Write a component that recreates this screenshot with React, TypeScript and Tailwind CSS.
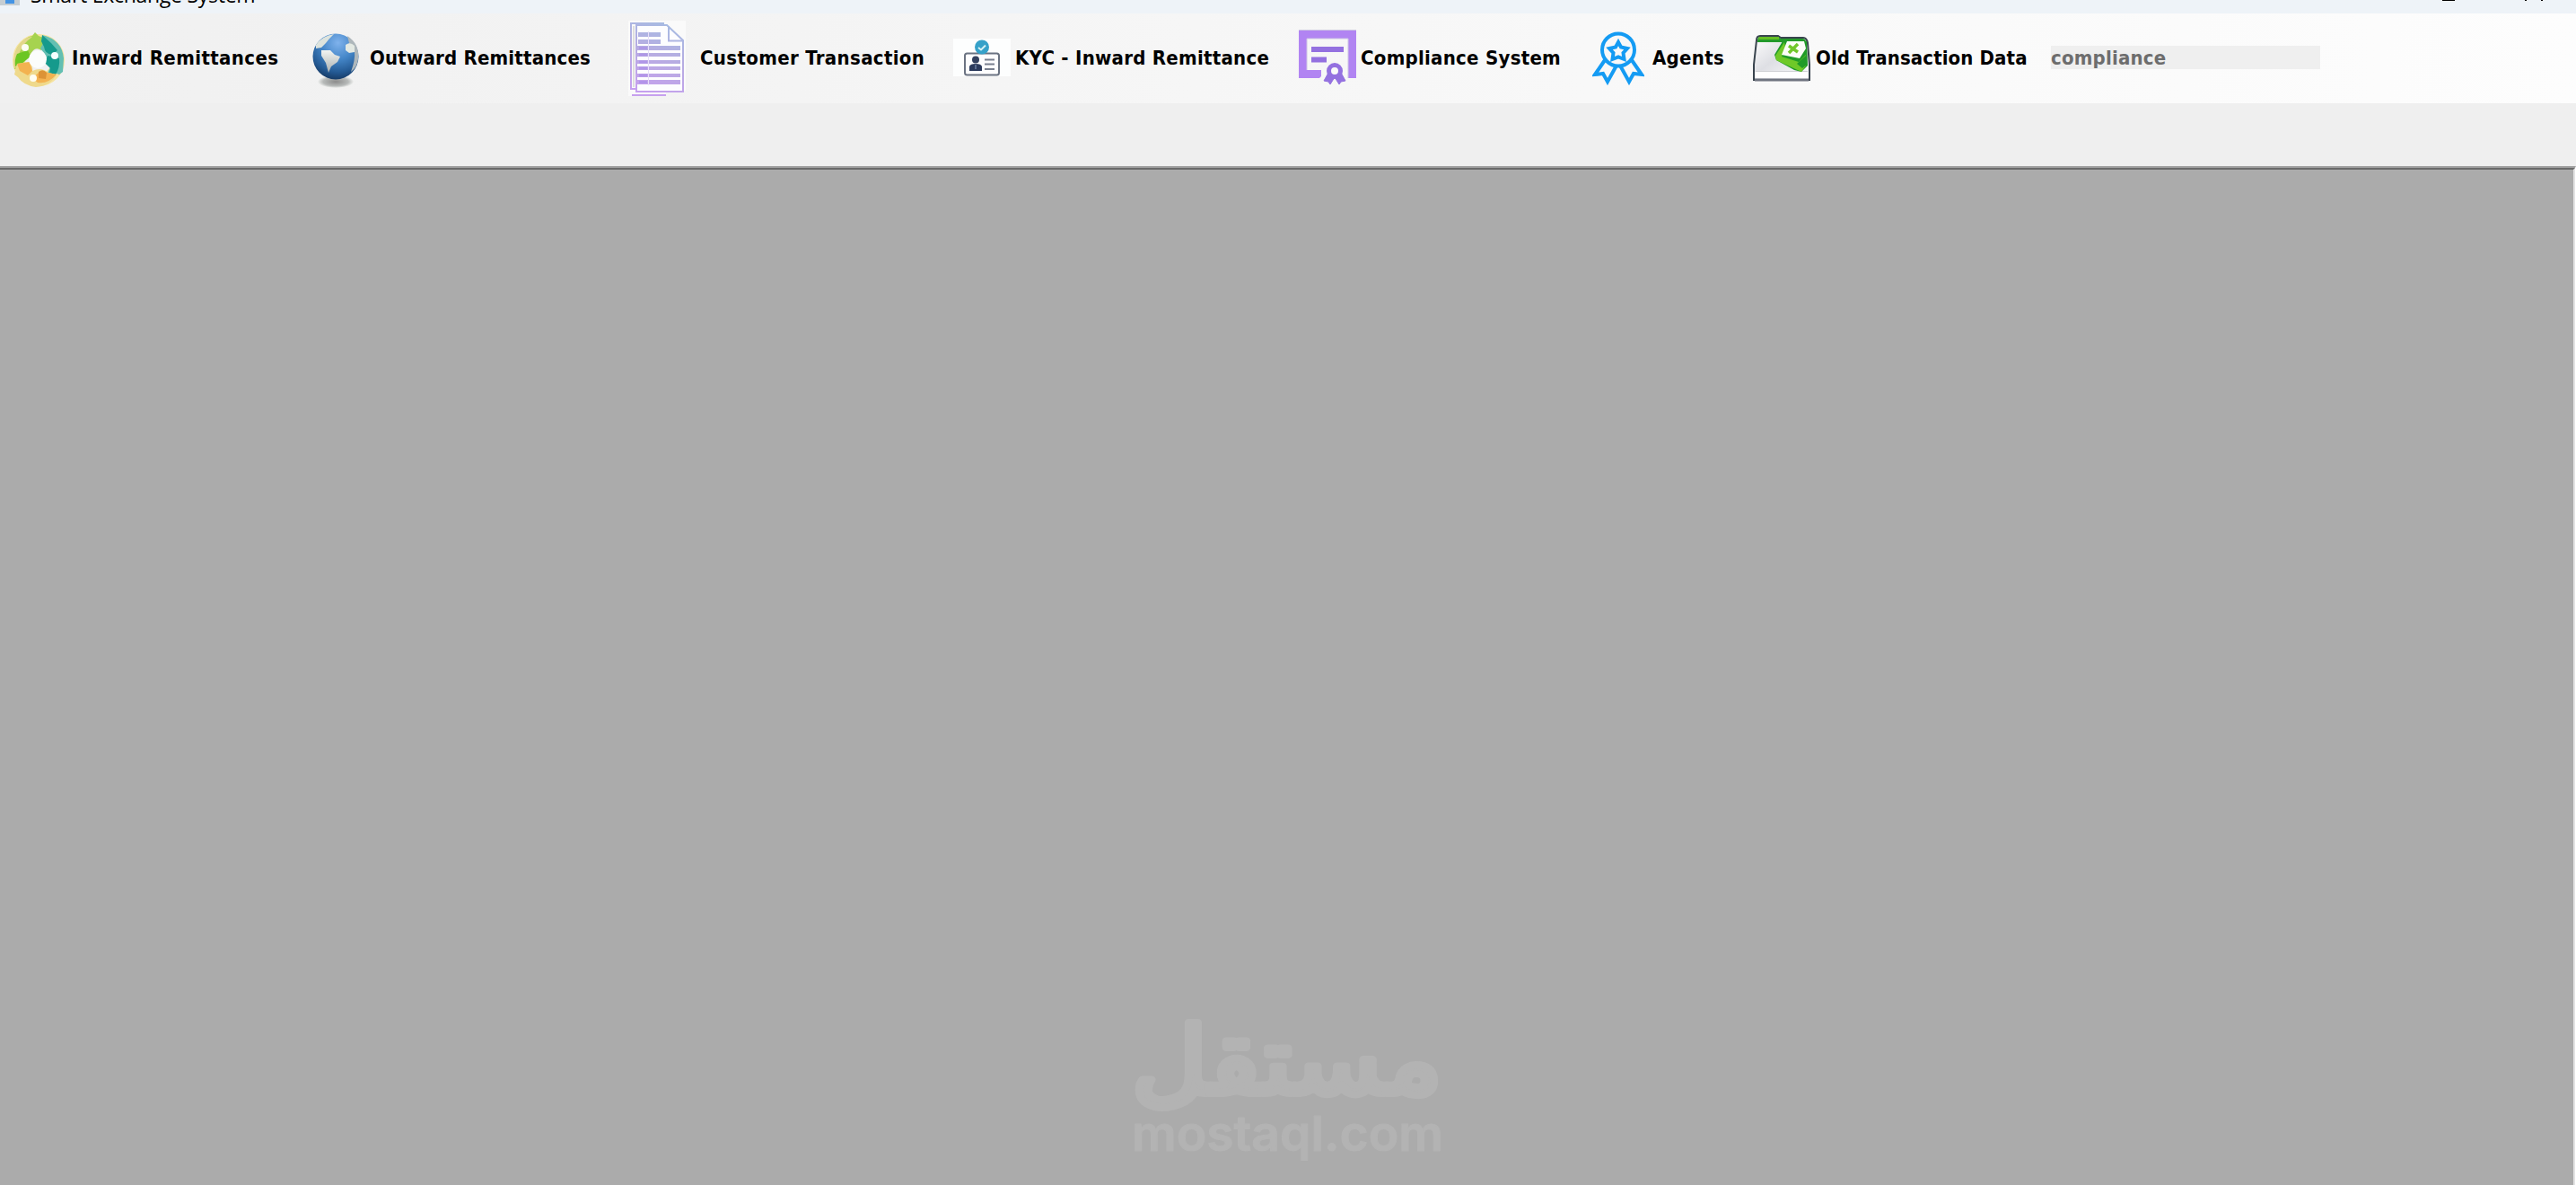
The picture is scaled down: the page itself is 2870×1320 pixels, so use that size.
import type { ReactNode } from 'react';

const InwardIcon = () => (
  <svg width="60" height="64" viewBox="1 0 60 64">
    <circle cx="31" cy="33" r="22" fill="none" stroke="#f6e3a0" strokeWidth="14" />
    <path d="M4 43 Q2 22 12 13 Q18 7 24 6 L27 2 L31 6 Q40 8 39 17 L34 22 Q26 17 22 27 L14 36 L7 42Z" fill="#a6d34f" />
    <path d="M4 42 Q1 21 14 11 Q19 7 24 7 Q14 14 10 24 Q6 32 7 41Z" fill="#e3d68c" />
    <path d="M7 26 L19 22 L22 29 L13 36 L5 40 Q4 32 7 26Z" fill="#6cc623" />
    <path d="M35 5 Q57 10 59 31 L58 46 L54 49 Q47 45 39 51 L44 41 Q41 39 38 36 L40 30 Q37 24 33 20 L37 12Z" fill="#63bfb2" />
    <path d="M35 5 L45 14 L52 22 L46 27 Q38 26 37 18 L34 12Z M41 28 L54 31 Q55 41 50 49 L43 48 L44 42 L38 36Z" fill="#159a8c" />
    <path d="M4 49 L7 37 L21 35 Q25 40 24 45 Q34 40 42 47 L51 49 Q44 62 28 63 Q14 61 8 52Z" fill="#efd98b" />
    <path d="M7 37 L21 35 L24 45 L19 50 L10 45Z M25 54 Q30 43 42 47 L51 49 Q41 60 30 58Z" fill="#f3b250" />
    <path d="M31 46 Q36 42 40 47 L39 54 L31 53Z" fill="#dc9336" />
    <circle cx="30" cy="32" r="10" fill="#fbfdfb" />
    <circle cx="16" cy="19" r="4" fill="#fdfdf4" />
    <circle cx="49" cy="28" r="4" fill="#f5ffff" />
    <circle cx="25" cy="53" r="4" fill="#fffdf0" />
  </svg>
);

const GlobeIcon = () => (
  <svg width="54" height="62" viewBox="0 0 54 62">
    <defs>
      <radialGradient id="ocean" cx="0.55" cy="0.2" r="0.8">
        <stop offset="0" stopColor="#7fb2ec" />
        <stop offset="0.45" stopColor="#4486c8" />
        <stop offset="0.8" stopColor="#245a94" />
        <stop offset="1" stopColor="#173c68" />
      </radialGradient>
      <radialGradient id="shade">
        <stop offset="0" stopColor="#8b8b8b" />
        <stop offset="0.7" stopColor="#b7bab9" />
        <stop offset="1" stopColor="#f0f1f0" />
      </radialGradient>
      <linearGradient id="land" x2="0" y2="1">
        <stop offset="0" stopColor="#f2f4f1" />
        <stop offset="1" stopColor="#a7adaf" />
      </linearGradient>
    </defs>
    <ellipse cx="26" cy="54" rx="20" ry="7" fill="url(#shade)" />
    <circle cx="26" cy="26" r="25.5" fill="url(#ocean)" />
    <path d="M4 13 Q11 3 24 1 L19 6 L15 11 L10 16 L4 17Z" fill="#dde3dd" />
    <path d="M39 3 Q53 12 51 29 Q50 38 43 43 Q48 29 47 21 L40 21 L37 16 L41 11Z" fill="#aeb7bb" />
    <path d="M37 13 Q42 9 47 14 L47 21 L41 22 L37 19Z" fill="#e3e9e3" />
    <path d="M10 19 L20 19 L25 24 L31 26 L28 32 L21 37 L18 44 L15 33 L10 25Z" fill="url(#land)" />
  </svg>
);

const DocumentIcon = () => (
  <svg width="64" height="84" viewBox="0 0 64 84">
    <defs>
      <linearGradient id="doc" gradientUnits="userSpaceOnUse" x1="50" y1="0" x2="20" y2="80">
        <stop offset="0" stopColor="#a5bde2" />
        <stop offset="0.5" stopColor="#b7ace2" />
        <stop offset="1" stopColor="#c6a0ee" />
      </linearGradient>
    </defs>
    <path d="M0 0h64v78H42v6H0z" fill="#fafafa" />
    <path d="M9 76H3V3H40" fill="none" stroke="url(#doc)" strokeWidth="2" />
    <path d="M6 6v68" stroke="#dedede" strokeWidth="2" />
    <path d="M9 5H43L61 22V79H9Z" fill="#fdfdff" stroke="url(#doc)" strokeWidth="2" />
    <path d="M45 6V22.500H61" fill="none" stroke="url(#doc)" strokeWidth="2" />
    <path d="M4 83H42" stroke="#c6a0ee" strokeWidth="2" />
    <g fill="url(#doc)">
      <rect x="11" y="13" width="25" height="5" />
      <rect x="11" y="21" width="25" height="5" />
      <rect x="10" y="28" width="48" height="5" />
      <rect x="10" y="36" width="48" height="4" />
      <rect x="10" y="44" width="48" height="4" />
      <rect x="10" y="51" width="48" height="4" />
      <rect x="10" y="59" width="48" height="4" />
      <rect x="10" y="66" width="48" height="5" />
    </g>
    <path d="M22.500 12v60" stroke="#e7defa" />
    <g stroke="#a98bea" strokeWidth="3" opacity="0.6">
      <path d="M12 30.500h9M12 38h9M12 46h9M12 53h9M12 61h9M12 68.500h9" />
    </g>
  </svg>
);

const IdCardIcon = () => (
  <svg width="64" height="42" viewBox="0 0 64 42">
    <path d="M0 0h64v42H0z" fill="#fdfefe" />
    <rect x="13" y="16.500" width="38" height="24" rx="2.500" fill="#fdfdfe" stroke="#6b7382" strokeWidth="2" />
    <circle cx="32" cy="9.500" r="8" fill="#36a1c9" />
    <path d="M28 10l3 2.500 5-5" fill="none" stroke="#d5f1f5" strokeWidth="2" />
    <circle cx="25" cy="23.500" r="4" fill="#33405e" />
    <path d="M18 36v-5q1-3 7-3t7 3v5z" fill="#2b3a5c" />
    <path d="M25 29v5" stroke="#8ca0c2" />
    <path d="M35 23.500h11M35 28.500h11M35 34h11" stroke="#787f8e" strokeWidth="2" />
  </svg>
);

const CertificateIcon = () => (
  <svg width="64" height="62" viewBox="0 0 64 62">
    <path d="M0 1H64V54H55V10H9V45H25V52L23 54H0Z" fill="#b184f2" />
    <path d="M0 .5H64" stroke="#cfc9e2" />
    <path d="M9 45V10H55V54" fill="none" stroke="#cdc5e4" />
    <path d="M17 22H47M17 33.500H28" stroke="#9471e0" strokeWidth="6" strokeLinecap="square" />
    <path d="M33 48L28 57 33 58 35 61 40 53 45 61 47 58 52 57 47 48Z" fill="#9471e0" stroke="#9471e0" strokeLinejoin="round" />
    <circle cx="40" cy="46" r="6.500" fill="#fafafa" stroke="#9471e0" strokeWidth="5" />
  </svg>
);

const AwardIcon = () => (
  <svg width="58" height="60" viewBox="0 0 58 60" fill="none" stroke="#149bf3" strokeWidth="4">
    <path d="M14 32L3 48 12 47 17 56 27 38M44 32L55 48 46 47 41 56 31 38" />
    <circle cx="29" cy="20.500" r="18" />
    <path d="M29 12L32 17.500 39 19 34.500 24 35.500 31 29 28.500 22.500 31 23.500 24 19 19 26 17.500Z" />
  </svg>
);

const FolderIcon = () => (
  <svg width="64" height="52" viewBox="0 0 64 52">
    <defs>
      <linearGradient id="folder" x2="1" y2="1">
        <stop offset="0" stopColor="#ffffff" />
        <stop offset="0.45" stopColor="#dedfe4" />
        <stop offset="1" stopColor="#ffffff" />
      </linearGradient>
    </defs>
    <path d="M1 50V33L4 6Q4 1 8 1H28L31 3H56Q60 3 61 9L63 33V50Z" fill="url(#folder)" stroke="#39444e" strokeWidth="2" />
    <path d="M5 7Q5 2 8 2H28L31 4H55Q59 4 59 8H5Z" fill="#239a2b" />
    <path d="M7 2H29V5H6Z" fill="#65bd25" />
    <path d="M2 41H62V48H2Z" fill="#fff" />
    <path d="M3 40.500H61" stroke="#d0d1d5" />
    <path d="M2 50H62" stroke="#707580" strokeWidth="3" />
    <path d="M33 7H60L61 34 54 41 46 39 26 28 24 22Z" fill="#209b28" />
    <path d="M25 23L35 8 36 14 32 24 51 30 59 22 59 34 54 41 41 35 26 28Z" fill="#6fc928" />
    <path d="M49 32L60 22V33L55 37Z" fill="#209b28" />
    <path d="M38 7H57L59 15 52 26 32 22Z" fill="#fbfdf8" />
    <path d="M40 12L50 19M50 10L40 20" stroke="#71c72b" strokeWidth="3.500" />
  </svg>
);

type ItemProps = {
  icon: ReactNode;
  label: string;
  // box holding the icon, including the space up to the label
  iconClass: string;
  labelClass: string;
};

const items: ItemProps[] = [
  { icon: <InwardIcon />, label: 'Inward Remittances', iconClass: 'w-[67px] pt-[19px]', labelClass: 'w-[268px] tracking-[0.4px]' },
  { icon: <GlobeIcon />, label: 'Outward Remittances', iconClass: 'w-[64px] pt-[22px]', labelClass: 'w-[288px] tracking-[0.2px]' },
  { icon: <DocumentIcon />, label: 'Customer Transaction', iconClass: 'w-[80px] pt-[8px]', labelClass: 'w-[282px] tracking-[0.35px]' },
  { icon: <IdCardIcon />, label: 'KYC - Inward Remittance', iconClass: 'w-[69px] pt-[28px]', labelClass: 'w-[316px] tracking-[0.27px]' },
  { icon: <CertificateIcon />, label: 'Compliance System', iconClass: 'w-[69px] pt-[18px]', labelClass: 'w-[258px] tracking-[0.27px]' },
  { icon: <AwardIcon />, label: 'Agents', iconClass: 'w-[67px] pt-[20px]', labelClass: 'w-[112px] tracking-[0.3px]' },
  { icon: <FolderIcon />, label: 'Old Transaction Data', iconClass: 'w-[70px] pt-[24px]', labelClass: 'w-[262px] tracking-[0.12px]' },
];

const ToolbarItem = ({ icon, label, iconClass, labelClass }: ItemProps) => (
  <button className="flex h-full shrink-0 items-start text-left">
    <span className={`block shrink-0 ${iconClass}`}>{icon}</span>
    <span className={`block shrink-0 pt-[37px] leading-[26px] whitespace-nowrap ${labelClass}`}>{label}</span>
  </button>
);

const TitleBar = () => (
  <header className="flex h-[15px] items-start justify-between overflow-hidden bg-[#eef3f8]">
    <div className="flex items-start">
      <div className="flex h-[6px] w-[22px] justify-center bg-[#c5cdd2]">
        <div className="h-[4px] w-[10px] bg-[#4494e4]" />
      </div>
      <span className="-mt-[22px] ml-[12px] font-['Open_Sans','Noto_Sans',sans-serif] text-[23px] leading-[32px] tracking-[-0.27px] whitespace-nowrap text-black">
        Smart Exchange System
      </span>
    </div>
    <div className="flex pr-[37px]">
      <div className="mr-[78px] h-px w-[14px] bg-black" />
      <div className="mr-[16px] h-px w-[2px] bg-black" />
      <div className="h-px w-[2px] bg-black" />
    </div>
  </header>
);

const Watermark = () => (
  <svg width="350" height="190" viewBox="0 0 350 190" fill="#b3b3b3">
    <text
      x="2"
      y="88"
      direction="ltr"
      textLength="346"
      lengthAdjust="spacingAndGlyphs"
      stroke="#b3b3b3"
      strokeWidth="8"
      strokeLinejoin="round"
      className="font-['DejaVu_Sans',sans-serif] text-[104px]"
    >
      مستقل
    </text>
    <text
      x="2"
      y="152"
      textLength="347"
      lengthAdjust="spacingAndGlyphs"
      stroke="#b3b3b3"
      strokeLinejoin="round"
      className="font-['Inter',sans-serif] text-[54px] font-semibold"
    >
      mostaql.com
    </text>
  </svg>
);

const App = () => {
  return (
    <div className="flex h-[1320px] w-[2870px] flex-col overflow-hidden bg-[#efefef]">
      <TitleBar />
      <nav className="flex h-[100px] items-start bg-linear-to-r from-[#f0f0f0] to-[#fdfdfd] pl-[13px] font-['DejaVu_Sans_Condensed','DejaVu_Sans',sans-serif] text-[22px] font-bold text-black">
        {items.map((item) => (
          <ToolbarItem key={item.label} {...item} />
        ))}
        <div className="mt-[36px] h-[26px] w-[300px] bg-[#efefef] leading-[28px] tracking-[0.2px] text-[#6d6d6d]">
          compliance
        </div>
      </nav>
      <div className="h-[70px] bg-[#efefef]" />
      <main className="flex flex-1 border-t-2 border-r border-t-[#a0a0a0] border-r-white">
        <div className="flex flex-1 items-end justify-center border-t-2 border-r-2 border-t-[#696969] border-r-[#e3e3e3] bg-[#ababab]">
          <Watermark />
        </div>
      </main>
    </div>
  );
};

export default App;
